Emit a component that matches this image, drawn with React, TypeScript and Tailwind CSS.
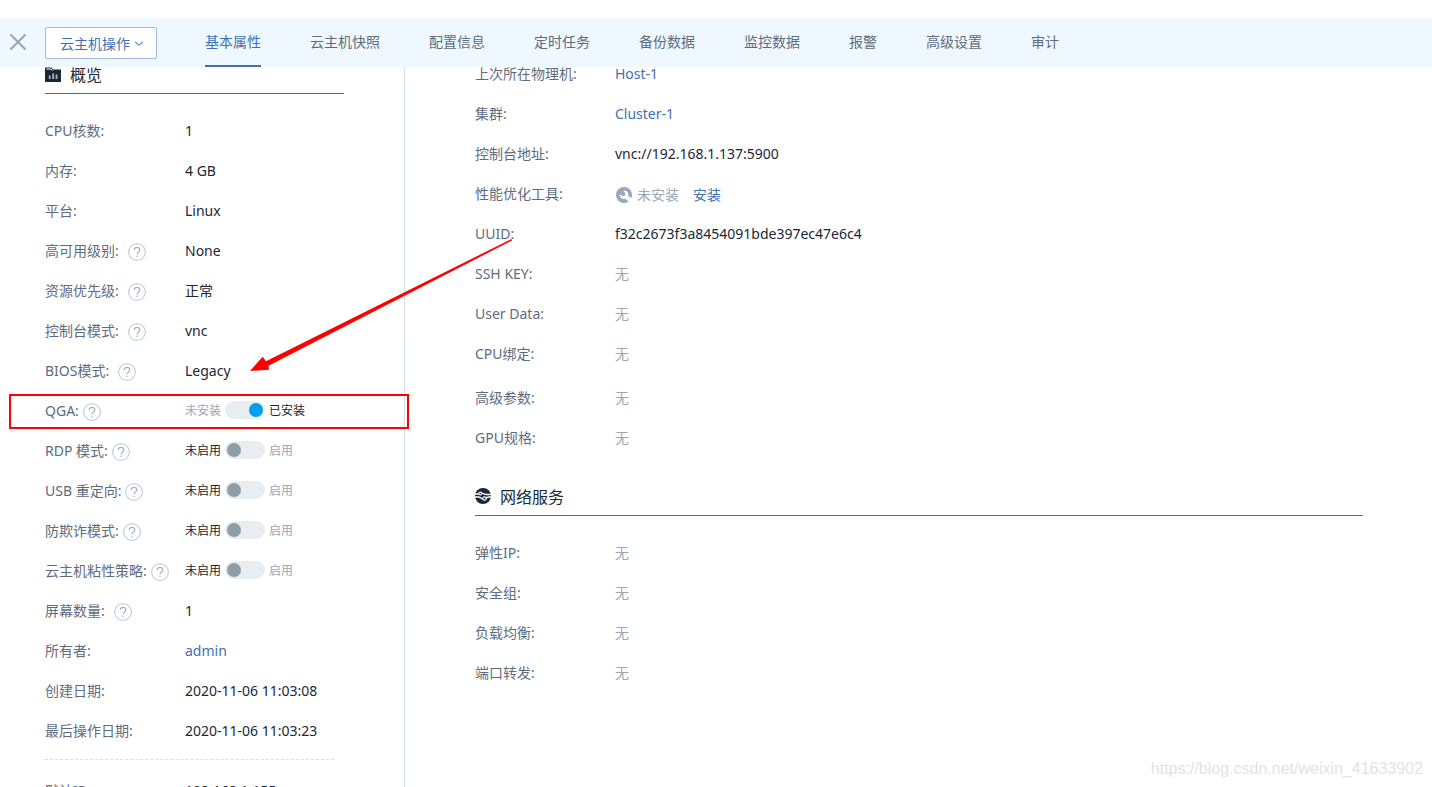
import { ReactNode } from 'react';

const tabs = ['基本属性', '云主机快照', '配置信息', '定时任务', '备份数据', '监控数据', '报警', '高级设置', '审计'];

function HelpIcon({ className = '' }: { className?: string }) {
  return (
    <button type="button" aria-label="帮助" className={`mt-[2px] flex-none cursor-pointer ${className}`}>
      <svg width="18" height="18" viewBox="0 0 18 18" fill="none" stroke="#c4d1dc" strokeWidth="1.2">
        <circle cx="9" cy="9" r="8.4" />
        <path d="M6.2 7c0-1.6 1.2-2.7 2.8-2.7s2.8 1 2.8 2.5c0 1.100-.7 1.700-1.400 2.300-.8.6-1.400 1-1.400 2.200" stroke="#a3b3c4" />
        <circle cx="9" cy="13.3" r=".8" fill="#a3b3c4" stroke="none" />
      </svg>
    </button>
  );
}

function OverviewIcon() {
  return (
    <svg width="16" height="16" viewBox="0 0 16 16" aria-hidden="true">
      <path d="M0 .5h6.500l1.500 2H16v12.500H0z" fill="#1a2736" />
      <path d="M1.300 2h4.700l1.300 1.700" stroke="#fff" strokeWidth="1" fill="none" />
      <path d="M4.700 8.500v3.500M8.200 6.500v5.500M11.500 7.500v4.500" stroke="#a9b3bd" strokeWidth="1.800" />
    </svg>
  );
}

function NetworkIcon() {
  return (
    <svg width="16" height="16" viewBox="0 0 16 16" fill="none" aria-hidden="true" className="-mt-[2px]">
      <circle cx="8" cy="8" r="8" fill="#1a2736" />
      <path d="M0 6h4M6.500 5.200c2.500 0 2.500 1.300 5 1.300H16M0 9h3.500c2.500 0 2 1.800 4.500 1.800M11 10c1-.6 1.500-1 3-1h2" stroke="#fff" strokeWidth="1.300" />
      <circle cx="5.300" cy="5.500" r="1.400" fill="#1a2736" stroke="#fff" strokeWidth="1.100" />
      <circle cx="9.500" cy="10.500" r="1.700" fill="#1a2736" stroke="#fff" strokeWidth="1.200" />
    </svg>
  );
}

function ToolIcon() {
  return (
    <svg width="16" height="16" viewBox="0 0 16 16" aria-hidden="true">
      <circle cx="8" cy="8" r="8" fill="#9aa7b8" />
      <path d="M7.300 3.800a4 4 0 0 1 4.900 5l3.600 2.600-2.800 3.400-4-3a4 4 0 0 1-5.200-4.800l2.700 2.300 2.200-.6.700-2.300z" fill="#fff" />
    </svg>
  );
}

interface RowProps {
  label: string;
  help?: 'near' | 'far';
  children: ReactNode;
}

function Row({ label, help, children }: RowProps) {
  return (
    <div className="flex h-10 items-center">
      <dt className="flex w-[140px] flex-none items-center whitespace-nowrap text-[#5f6b7d]">
        {label}
        {help && <HelpIcon className={help === 'far' ? 'ml-[9px]' : 'ml-1'} />}
      </dt>
      <dd className="flex items-center whitespace-nowrap text-[#1a2736]">{children}</dd>
    </div>
  );
}

interface ToggleProps {
  label: string;
  off: string;
  on: string;
  checked?: boolean;
}

function Toggle({ label, off, on, checked = false }: ToggleProps) {
  return (
    <label className="flex cursor-pointer items-center gap-1 text-xs">
      <span className={checked ? 'text-[#9aa7b8]' : 'text-[#1a2736]'}>{off}</span>
      <input type="checkbox" aria-label={label} defaultChecked={checked} className="peer sr-only" />
      <span className="-mt-[2px] flex h-[18px] w-10 items-center rounded-full bg-[#e8edf1] px-[2px] peer-checked:justify-end peer-checked:[&>i]:bg-[#009fee]">
        <i className="size-[14px] rounded-full bg-[#8f9ea6]" />
      </span>
      <span className={checked ? 'text-[#1a2736]' : 'text-[#9aa7b8]'}>{on}</span>
    </label>
  );
}

function SectionTitle({ icon, children }: { icon: ReactNode; children: ReactNode }) {
  return (
    <h2 className="flex h-[35px] items-center gap-[9px] border-b border-[#5f6b7d] pb-[2px] text-base text-[#1a2736]">
      {icon}
      {children}
    </h2>
  );
}

function None() {
  return <span className="text-[#9aa7b8]">无</span>;
}

function Header() {
  return (
    <header className="relative z-10 flex h-[49px] flex-none items-center bg-[#f0f8ff]">
      <button type="button" aria-label="关闭" className="mb-[2px] ml-[10px] cursor-pointer">
        <svg width="16" height="16" viewBox="0 0 16 16" stroke="#97a5b7" strokeWidth="2">
          <path d="M.5.5l15 15M15.5.5l-15 15" />
        </svg>
      </button>
      <button type="button" className="mt-[1px] ml-[19px] flex h-8 w-28 flex-none cursor-pointer items-center justify-center gap-1 rounded-[2px] border border-[#a1b9dc] bg-white pt-[2px] pl-[2px] text-[#3f70b5]">
        云主机操作
        <svg width="10" height="6" viewBox="0 0 10 6" fill="none" stroke="#3f70b5" strokeWidth="1.1">
          <path d="M1 1c1.5 0 2.5 3 4 3s2.500-3 4-3" />
        </svg>
      </button>
      <nav className="ml-12 flex h-full gap-[49px]">
        {tabs.map((tab, i) => (
          <a
            key={tab}
            href="#"
            className={`flex items-center border-b-2 whitespace-nowrap ${i === 0 ? 'border-[#3f70b5] text-[#3f70b5]' : 'border-transparent text-[#5f6b7d]'}`}
          >
            {tab}
          </a>
        ))}
      </nav>
    </header>
  );
}

function Overview() {
  return (
    <aside className="w-[405px] flex-none border-r border-[#d8dee6] pt-[5px] pr-[60px] pl-[45px]">
      <SectionTitle icon={<OverviewIcon />}>概览</SectionTitle>
      <dl className="mt-[17px]">
        <Row label="CPU核数:">1</Row>
        <Row label="内存:">4 GB</Row>
        <Row label="平台:">Linux</Row>
        <Row label="高可用级别:" help="far">None</Row>
        <Row label="资源优先级:" help="far">正常</Row>
        <Row label="控制台模式:" help="far">vnc</Row>
        <Row label="BIOS模式:" help="far">Legacy</Row>
        <Row label="QGA:" help="near">
          <Toggle label="QGA" off="未安装" on="已安装" checked />
        </Row>
        <Row label="RDP 模式:" help="near">
          <Toggle label="RDP 模式" off="未启用" on="启用" />
        </Row>
        <Row label="USB 重定向:" help="near">
          <Toggle label="USB 重定向" off="未启用" on="启用" />
        </Row>
        <Row label="防欺诈模式:" help="near">
          <Toggle label="防欺诈模式" off="未启用" on="启用" />
        </Row>
        <Row label="云主机粘性策略:" help="near">
          <Toggle label="云主机粘性策略" off="未启用" on="启用" />
        </Row>
        <Row label="屏幕数量:" help="far">1</Row>
        <Row label="所有者:">
          <a href="#" className="text-[#3f70b5]">admin</a>
        </Row>
        <Row label="创建日期:">2020-11-06 11:03:08</Row>
        <Row label="最后操作日期:">2020-11-06 11:03:23</Row>
      </dl>
      <dl className="mt-2 mr-[10px] border-t border-dashed border-[#d8dee6] pt-[11px]">
        <Row label="默认IP:">192.168.1.155</Row>
      </dl>
    </aside>
  );
}

function Details() {
  return (
    <section className="mr-[69px] ml-[70px] flex-1">
      <dl>
        <Row label="上次所在物理机:">
          <a href="#" className="text-[#3f70b5]">Host-1</a>
        </Row>
        <Row label="集群:">
          <a href="#" className="text-[#3f70b5]">Cluster-1</a>
        </Row>
        <Row label="控制台地址:">vnc://192.168.1.137:5900</Row>
        <Row label="性能优化工具:">
          <span className="flex items-center pt-[2px] pl-px">
            <ToolIcon />
            <span className="ml-[5px] text-[#9aa7b8]">未安装</span>
            <a href="#" className="ml-[14px] text-[#3f70b5]">安装</a>
          </span>
        </Row>
        <Row label="UUID:">f32c2673f3a8454091bde397ec47e6c4</Row>
        <Row label="SSH KEY:"><None /></Row>
        <Row label="User Data:"><None /></Row>
        <Row label="CPU绑定:"><None /></Row>
      </dl>
      <dl className="mt-1">
        <Row label="高级参数:"><None /></Row>
        <Row label="GPU规格:"><None /></Row>
      </dl>
      <div className="mt-[23px]">
        <SectionTitle icon={<NetworkIcon />}>网络服务</SectionTitle>
      </div>
      <dl className="mt-[17px]">
        <Row label="弹性IP:"><None /></Row>
        <Row label="安全组:"><None /></Row>
        <Row label="负载均衡:"><None /></Row>
        <Row label="端口转发:"><None /></Row>
      </dl>
    </section>
  );
}

// Red box round the QGA row and the arrow that comes down from UUID
function Annotations() {
  return (
    <>
      <div className="absolute top-[394px] left-[9px] h-[35px] w-[400px] border-2 border-[#f00]" />
      <svg className="pointer-events-none absolute top-[236px] left-[248px]" width="268" height="138" viewBox="248 236 268 138">
        <path d="M511.500 239L266 361.200L262.700 356.700L250 371L269 369.700L268.500 365.700L512 240.500z" fill="#f00" />
      </svg>
    </>
  );
}

export default function App() {
  return (
    <div className="relative flex h-screen flex-col overflow-hidden bg-white pt-[18px] font-['Noto_Sans','Noto_Sans_CJK_SC',sans-serif] text-sm">
      <Header />
      <main className="-mt-[13px] flex min-h-0 flex-1">
        <Overview />
        <Details />
      </main>
      <Annotations />
      <div className="absolute right-[9px] bottom-[6px] font-['Liberation_Sans',sans-serif] text-base text-[#e3e3e3]">
        https://blog.csdn.net/weixin_41633902
      </div>
    </div>
  );
}
